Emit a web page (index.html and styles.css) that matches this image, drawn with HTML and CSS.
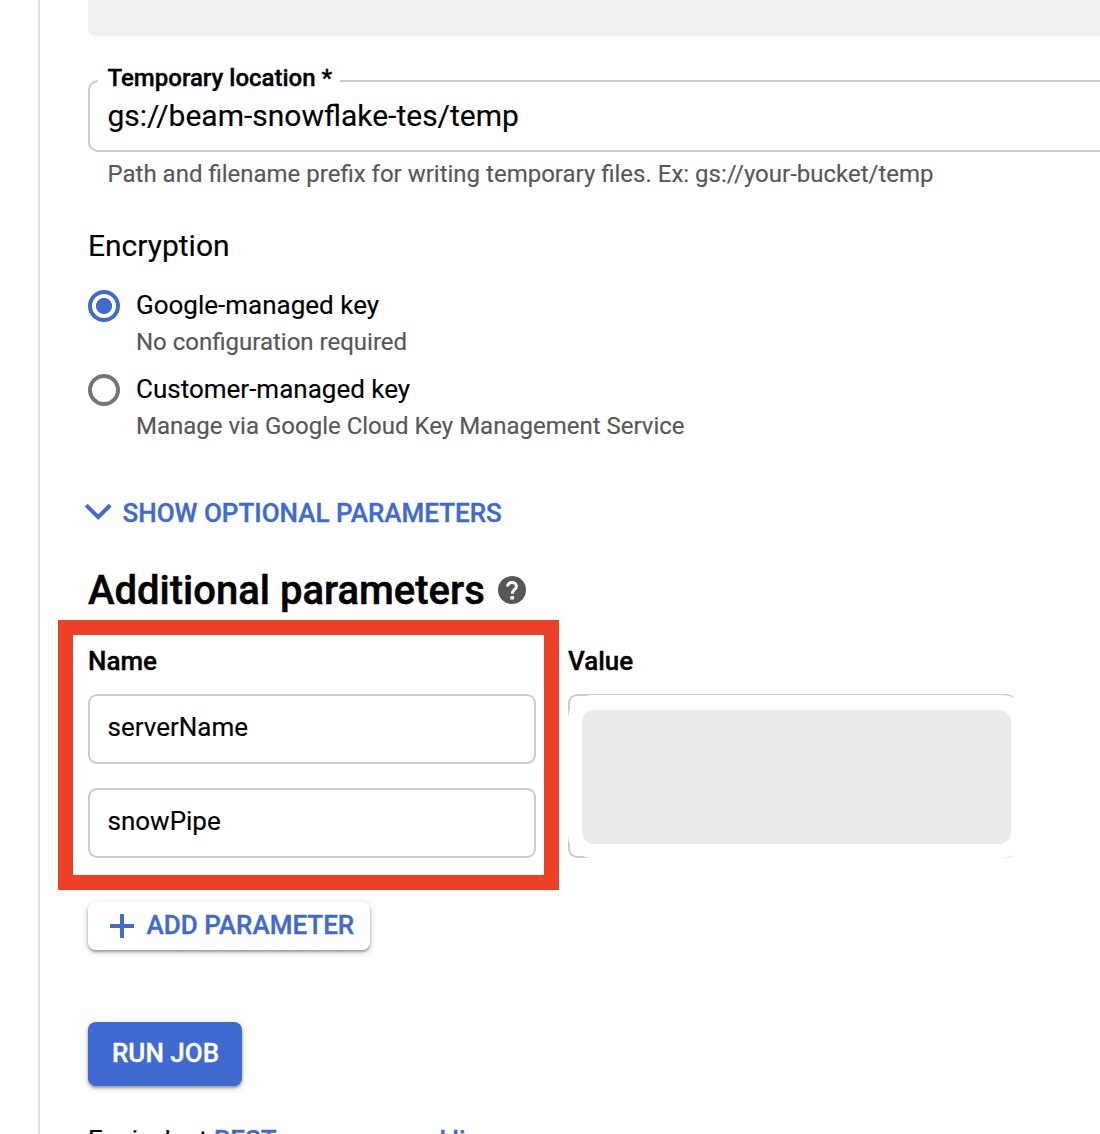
FILE: index.html
```html
<!DOCTYPE html>
<html lang="en">
<head>
<meta charset="utf-8">
<title>Create job from template</title>
<link rel="stylesheet" href="styles.css">
</head>
<body>
<main class="panel">
  <div class="prior-field"></div>

  <fieldset class="location">
    <legend class="location-label">Temporary location *</legend>
    <div class="location-value">gs://beam-snowflake-tes/temp</div>
  </fieldset>
  <div class="hint">Path and filename prefix for writing temporary files. Ex: gs://your-bucket/temp</div>

  <h3 class="encryption">Encryption</h3>
  <div class="option">
    <span class="radio radio-on"></span>
    <div class="option-text">
      <div class="option-title">Google-managed key</div>
      <div class="option-note">No configuration required</div>
    </div>
  </div>
  <div class="option">
    <span class="radio"></span>
    <div class="option-text">
      <div class="option-title">Customer-managed key</div>
      <div class="option-note">Manage via Google Cloud Key Management Service</div>
    </div>
  </div>

  <div class="expander">
    <svg class="chevron" width="28" height="18" viewBox="0 0 28 18"><path d="M2.2 1.2 14.2 13.2 26.2 1.2" fill="none" stroke="#3f6ad0" stroke-width="4"/></svg>
    <span>SHOW OPTIONAL PARAMETERS</span>
  </div>

  <div class="heading">
    <h2 class="heading-text">Additional parameters</h2>
    <svg class="help" width="28" height="28" viewBox="0 0 28 28"><circle cx="14" cy="14" r="14" fill="#575757"/><path d="M9.6 10.6C9.6 7.9 11.5 6.5 14 6.5s4.4 1.5 4.4 3.9c0 3.2-4.2 3.4-4.2 7.3" fill="none" stroke="#fff" stroke-width="3"/><rect x="12.3" y="19.9" width="3.8" height="3.7" rx=".8" fill="#fff"/></svg>
  </div>

  <div class="params">
    <div class="column">
      <div class="column-title">Name</div>
      <div class="field">serverName</div>
      <div class="field">snowPipe</div>
      <div class="highlight"></div>
    </div>
    <div class="column">
      <div class="column-title">Value</div>
      <div class="values"><div class="cover"><div class="redacted"></div></div></div>
    </div>
  </div>

  <button class="add-button">
    <svg width="24" height="24" viewBox="0 0 24 24"><path d="M0 12h24M12 0v24" stroke="#3f6ad0" stroke-width="4"/></svg>
    <span class="add-label">ADD PARAMETER</span>
  </button>
  <button class="run-button">RUN JOB</button>
  <p class="equivalent">Equivalent <a class="link">REST</a> <span class="or">or</span> <a class="link">command line</a></p>
</main>
</body>
</html>
```

FILE: styles.css
```css
* { box-sizing: border-box; }
body {
  margin: 0;
  height: 1134px;
  overflow: hidden;
  background: #fff;
  color: #000;
  font-family: Roboto, sans-serif;
  font-size: 26px;
  -webkit-text-stroke: 0.15px currentColor;
}
h2, h3, p { margin: 0; font-weight: 400; }
.panel {
  height: 1134px;
  margin-left: 38px;
  padding-left: 48px;
  border-left: 2px solid #e0e0e0;
  overflow: hidden;
}
.prior-field {
  height: 36px;
  background: #f1f1f1;
  border-bottom-left-radius: 8px;
}
.location {
  min-width: 0;
  height: 87px;
  margin: 29px 0 0;
  padding: 0 0 0 8px;
  border: 2px solid #ccc;
  border-right: 0;
  border-radius: 10px 0 0 10px;
}
.location-label {
  height: 32px;
  padding: 0 7.5px 0 9.5px;
  font-size: 24px;
  font-weight: 500;
  line-height: 27px;
  white-space: nowrap;
  -webkit-text-stroke-width: 0.35px;
}
.location-value {
  padding-left: 9.5px;
  font-size: 30px;
  line-height: 38px;
}
.hint {
  margin: 6px 0 0 19.5px;
  color: #575757;
  font-size: 24px;
  line-height: 32px;
  white-space: nowrap;
}
.encryption { margin-top: 36px; font-size: 30px; line-height: 40px; }
.option { display: flex; gap: 16px; height: 84px; }
.encryption + .option { margin-top: 22px; }
.radio {
  width: 32px;
  height: 32px;
  margin-top: 2px;
  border: 4px solid #757575;
  border-radius: 50%;
}
.radio-on {
  border-color: #3f6ad0;
  background: radial-gradient(circle, #3f6ad0 7.6px, transparent 8.4px);
}
.option-title { line-height: 34px; }
.option-note { margin-top: 2px; color: #575757; font-size: 24px; line-height: 36px; }
.expander {
  display: flex;
  gap: 10.5px;
  align-items: center;
  height: 36px;
  margin: 39px 0 0 -4px;
  color: #3f6ad0;
  font-weight: 500;
  -webkit-text-stroke-width: 0.35px;
}
.heading {
  display: flex;
  gap: 13px;
  align-items: center;
  height: 48px;
  margin-top: 35px;
}
.heading-text {
  padding-top: 2px;
  font-size: 40px;
  font-weight: 500;
  line-height: 48px;
  -webkit-text-stroke-width: 0.5px;
}
.params { display: flex; gap: 32px; margin-top: 30px; }
.column { position: relative; width: 448px; }
.column-title {
  height: 50px;
  font-weight: 500;
  line-height: 34px;
  -webkit-text-stroke-width: 0.35px;
}
.field {
  height: 70px;
  margin-bottom: 24px;
  padding-left: 17.5px;
  border: 2px solid #ccc;
  border-radius: 9px;
  line-height: 62px;
}
.highlight {
  position: absolute;
  top: -24px;
  left: -30px;
  width: 501px;
  height: 270px;
  border: 15px solid #ed4027;
}
.values {
  position: relative;
  height: 164px;
  border: 2px solid #ccc;
  border-radius: 9px;
}
.cover {
  position: absolute;
  inset: -1px -12px -2px -2px;
  padding: 15px 15px 14px 14px;
  background: #fff;
  border-radius: 24px;
}
.redacted { height: 134px; background: #ebebeb; border-radius: 12px; }
button {
  display: flex;
  align-items: center;
  border: 0;
  border-radius: 8px;
  font: 500 26px/36px Roboto, sans-serif;
  -webkit-text-stroke: 0.35px currentColor;
}
.add-button {
  gap: 12.5px;
  width: 282px;
  height: 48px;
  margin-top: 20px;
  padding: 0 0 0 22px;
  background: #fff;
  color: #3f6ad0;
  box-shadow: 0 2px 3px rgba(0,0,0,.35), 0 2px 8px rgba(0,0,0,.14);
}
.add-label { padding-bottom: 2px; }
.run-button {
  width: 154px;
  height: 64px;
  margin-top: 72px;
  padding: 0 0 2px 24px;
  background: #3f6ad0;
  color: #fff;
  box-shadow: 0 2px 3px rgba(0,0,0,.35), 0 2px 8px rgba(0,0,0,.14);
}
.equivalent { margin-top: 38px; line-height: 32px; }
.or { margin: 0 8px; }
.link { color: #3f6ad0; font-weight: 500; -webkit-text-stroke-width: 0.35px; }
```
